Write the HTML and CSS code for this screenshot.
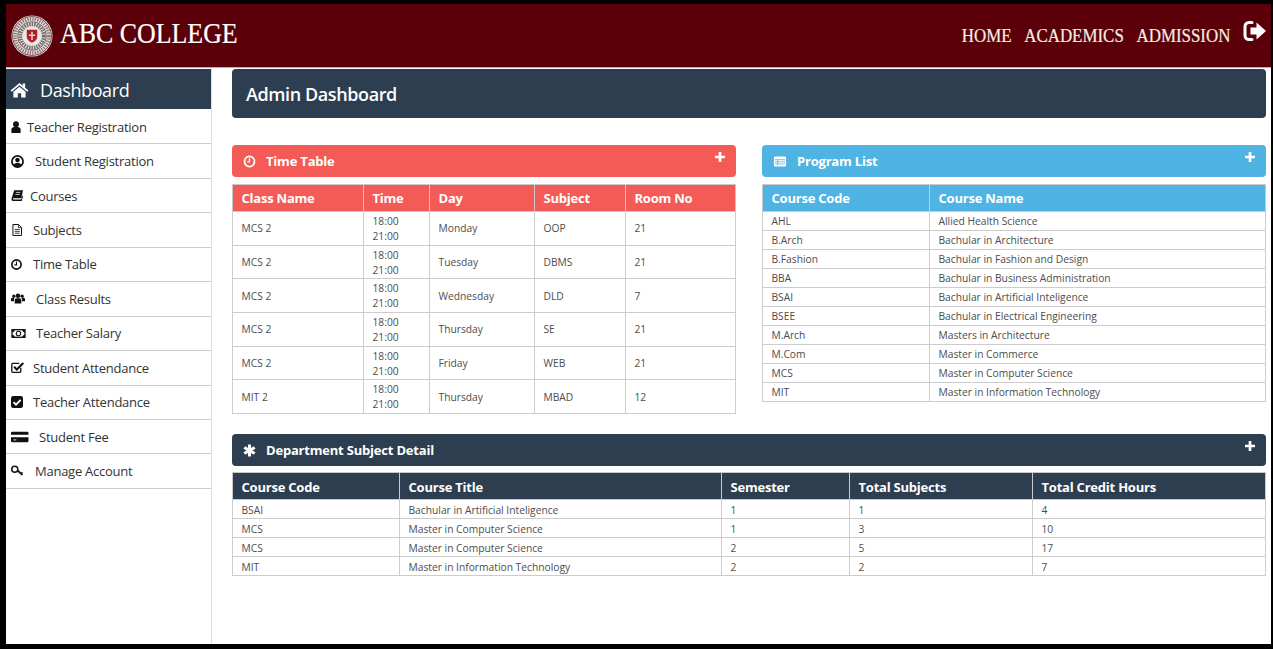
FILE: index.html
```html
<!DOCTYPE html>
<html lang="en">
<head>
<meta charset="utf-8">
<title>ABC College - Admin Dashboard</title>
<link rel="stylesheet" href="styles.css">
</head>
<body>
<svg class="defs" width="0" height="0" aria-hidden="true">
  <symbol id="i-plus" viewBox="0 0 12 12"><path d="M4.4 0h3.2v4.4H12v3.2H7.6V12H4.4V7.6H0V4.4h4.4z" fill="currentColor"/></symbol>
  <symbol id="i-clock" viewBox="0 0 14 14"><circle cx="7" cy="7" r="5.4" fill="none" stroke="currentColor" stroke-width="1.9"/><path d="M7 3.6v3.9H4.6" fill="none" stroke="currentColor" stroke-width="1.4"/></symbol>
</svg>
<div class="frame">
  <header class="topbar">
    <div class="brand">
      <svg class="logo" viewBox="0 0 44 44" aria-hidden="true">
        <circle cx="22" cy="22" r="21.5" fill="#e8e2e0"/>
        <circle cx="22" cy="22" r="20.300" fill="none" stroke="#6d4646" stroke-width="1"/>
        <circle cx="22" cy="22" r="17.700" fill="none" stroke="#8f7474" stroke-width="3.600" stroke-dasharray="1.400 1.200"/>
        <circle cx="22" cy="22" r="15" fill="none" stroke="#5f3a3a" stroke-width=".8"/>
        <circle cx="22" cy="22" r="12.300" fill="none" stroke="#6f6f6f" stroke-width="4" stroke-dasharray="1.600 1"/>
        <circle cx="22" cy="22" r="9.500" fill="#ede6e3"/>
        <path d="M16.500 15.500h11v7c0 3.500-3 5.500-5.500 6.500-2.500-1-5.500-3-5.500-6.500z" fill="#ad1f2a"/>
        <path d="M21.200 17.500h1.600v3h2.500v1.600h-2.500v4h-1.600v-4h-2.500v-1.600h2.500z" fill="#eccfc8"/>
      </svg>
      <span class="brand-name">ABC COLLEGE</span>
    </div>
    <nav class="topnav">
      <div class="topnav-links">
        <a class="topnav-link">HOME</a>
        <a class="topnav-link">ACADEMICS</a>
        <a class="topnav-link">ADMISSION</a>
      </div>
      <svg class="signout" viewBox="0 0 24 22" aria-hidden="true">
        <path d="M9 2.500H6A4 4 0 0 0 2 6.500v9a4 4 0 0 0 4 4h3" fill="none" stroke="currentColor" stroke-width="3" stroke-linecap="round"/>
        <path d="M13.500 2.500l9.500 8.500-9.500 8.500v-5H7.500v-7h6z" fill="currentColor"/>
      </svg>
    </nav>
  </header>
  <div class="body-row">
    <aside class="sidebar">
      <div class="side-head">
        <svg class="side-home" viewBox="0 0 20 17" aria-hidden="true"><path d="M10 1L0.500 9l1.200 1.400L10 3.500l8.300 6.900L19.500 9 16 6V1.500h-2.500v2.400z" fill="currentColor"/><path d="M10 5l-6.500 5.400V16.500h4.700v-4.500h3.600v4.500h4.700v-6.100z" fill="currentColor"/></svg>
        <span>Dashboard</span>
      </div>
      <a class="side-item it-user"><svg class="si" viewBox="2 .5 10 13"><circle cx="7" cy="4" r="3.200" fill="currentColor"/><path d="M2 13.500V10c0-2 1.500-3 3-3h4c1.500 0 3 1 3 3v3.500z" fill="currentColor"/></svg>Teacher Registration</a>
      <a class="side-item it-circle"><svg class="si" viewBox=".5 .5 13 13"><circle cx="7" cy="7" r="5.600" fill="none" stroke="currentColor" stroke-width="1.700"/><circle cx="7" cy="5.500" r="2.300" fill="currentColor"/><path d="M3 11c.5-2 2-2.800 4-2.800s3.500.8 4 2.800l-4 2z" fill="currentColor"/></svg>Student Registration</a>
      <a class="side-item it-book"><svg class="si" viewBox=".3 1.300 13.400 12.400"><path d="M3.500 1.500H13.500L11.500 10.500H2.800C2.200 10.500 2 11 2 11.300s.3.700.9.700H11.500l1-4.500 1 .5-1.500 6H2.500C1 13.500.300 12.500.600 11z" fill="currentColor"/><path d="M5.500 4h5M5 6.300h5" stroke="#fff" stroke-width=".8"/></svg>Courses</a>
      <a class="side-item it-file"><svg class="si" viewBox="1.500 .4 11 13.200"><path d="M2.500 1h6.300L12 4.200V13H2.500z" fill="none" stroke="currentColor" stroke-width="1.100"/><path d="M8.500 1v3.500H12M4.500 6.500h5.500M4.500 8.500h5.500M4.500 10.500h5.500" fill="none" stroke="currentColor" stroke-width=".9"/></svg>Subjects</a>
      <a class="side-item it-clock"><svg class="si" viewBox=".6 .6 12.800 12.800"><use href="#i-clock" width="14" height="14"/></svg>Time Table</a>
      <a class="side-item it-users"><svg class="si" viewBox="0 .8 17 13"><circle cx="8.500" cy="4" r="2.700" fill="currentColor"/><circle cx="3.500" cy="4.500" r="2" fill="currentColor"/><circle cx="13.500" cy="4.500" r="2" fill="currentColor"/><path d="M4.500 13.500V9.500c0-1.500 1-2.500 2.500-2.500h3c1.500 0 2.500 1 2.500 2.500v4z" fill="currentColor"/><path d="M0 10.500V8c0-1 .8-1.700 1.800-1.700H4L3.400 10.500zM17 10.500V8c0-1-.8-1.700-1.800-1.700H13l.6 4.200z" fill="currentColor"/></svg>Class Results</a>
      <a class="side-item it-money"><svg class="si" viewBox=".2 1.900 16.600 10.400"><rect x="1" y="2.700" width="15" height="8.800" fill="none" stroke="currentColor" stroke-width="1.500"/><circle cx="8.500" cy="7.100" r="2.600" fill="none" stroke="currentColor" stroke-width="1.300"/><path d="M1 2.700h3.200C4.200 4.500 2.800 5.700 1 5.700zM16 2.700h-3.200c0 1.800 1.400 3 3.200 3zM1 11.500h3.200C4.200 9.700 2.800 8.500 1 8.500zM16 11.500h-3.200c0-1.800 1.400-3 3.200-3z" fill="currentColor"/></svg>Teacher Salary</a>
      <a class="side-item it-check"><svg class="si" viewBox=".8 1.700 12.800 11"><path d="M10.500 7.500V11a1 1 0 0 1-1 1H2.500a1 1 0 0 1-1-1V4a1 1 0 0 1 1-1H9" fill="none" stroke="currentColor" stroke-width="1.300"/><path d="M3.800 6.500L6.500 9.200 13 2.700" fill="none" stroke="currentColor" stroke-width="2"/></svg>Student Attendance</a>
      <a class="side-item it-checked"><svg class="si" viewBox="1 1 12 12"><rect x="1" y="1" width="12" height="12" rx="2.200" fill="currentColor"/><path d="M3.500 7.200L6 9.700 10.700 4.800" fill="none" stroke="#fff" stroke-width="1.900"/></svg>Teacher Attendance</a>
      <a class="side-item it-card"><svg class="si" viewBox="0 1.500 18 11"><path d="M1.500 1.500h15A1.500 1.500 0 0 1 18 3v1.800H0V3a1.500 1.500 0 0 1 1.500-1.500zM0 7.200h18V11a1.500 1.500 0 0 1-1.500 1.500h-15A1.500 1.500 0 0 1 0 11z" fill="currentColor"/><path d="M2.500 10h3" stroke="#fff" stroke-width=".9"/></svg>Student Fee</a>
      <a class="side-item it-key"><svg class="si" viewBox=".4 .7 14.200 12.200"><circle cx="4.700" cy="5" r="3.400" fill="none" stroke="currentColor" stroke-width="1.700"/><path d="M7.200 7.300L12.500 12.200 14.200 11 13 9.800 14 9 12.800 8 11.800 8.800 8.700 5.800" fill="currentColor"/></svg>Manage Account</a>
    </aside>
    <main class="main">
      <div class="title-bar">Admin Dashboard</div>
      <div class="two-col">
        <section>
          <div class="panel red"><svg class="pi" viewBox="0 0 14 14"><use href="#i-clock" width="14" height="14"/></svg><span>Time Table</span><svg class="plus" viewBox="0 0 12 12"><use href="#i-plus" width="12" height="12"/></svg></div>
          <table class="tbl tbl-red tall">
            <colgroup><col class="c131"><col class="c66"><col class="c105"><col class="c91"><col></colgroup>
            <thead><tr><th>Class Name</th><th>Time</th><th>Day</th><th>Subject</th><th>Room No</th></tr></thead>
            <tbody>
              <tr><td>MCS 2</td><td>18:00<br>21:00</td><td>Monday</td><td>OOP</td><td>21</td></tr>
              <tr><td>MCS 2</td><td>18:00<br>21:00</td><td>Tuesday</td><td>DBMS</td><td>21</td></tr>
              <tr><td>MCS 2</td><td>18:00<br>21:00</td><td>Wednesday</td><td>DLD</td><td>7</td></tr>
              <tr><td>MCS 2</td><td>18:00<br>21:00</td><td>Thursday</td><td>SE</td><td>21</td></tr>
              <tr><td>MCS 2</td><td>18:00<br>21:00</td><td>Friday</td><td>WEB</td><td>21</td></tr>
              <tr><td>MIT 2</td><td>18:00<br>21:00</td><td>Thursday</td><td>MBAD</td><td>12</td></tr>
            </tbody>
          </table>
        </section>
        <section>
          <div class="panel blue"><svg class="pi" viewBox="0 0 14 14"><rect x=".5" y="1.500" width="13" height="11" rx="1.200" fill="currentColor"/><path d="M1.500 5h11M1.500 7.300h11M1.500 9.600h11M4.500 5v6" stroke="#4fb3e3" stroke-width=".8"/></svg><span>Program List</span><svg class="plus" viewBox="0 0 12 12"><use href="#i-plus" width="12" height="12"/></svg></div>
          <table class="tbl tbl-blue">
            <colgroup><col class="c167"><col></colgroup>
            <thead><tr><th>Course Code</th><th>Course Name</th></tr></thead>
            <tbody>
              <tr><td>AHL</td><td>Allied Health Science</td></tr>
              <tr><td>B.Arch</td><td>Bachular in Architecture</td></tr>
              <tr><td>B.Fashion</td><td>Bachular in Fashion and Design</td></tr>
              <tr><td>BBA</td><td>Bachular in Business Administration</td></tr>
              <tr><td>BSAI</td><td>Bachular in Artificial Inteligence</td></tr>
              <tr><td>BSEE</td><td>Bachular in Electrical Engineering</td></tr>
              <tr><td>M.Arch</td><td>Masters in Architecture</td></tr>
              <tr><td>M.Com</td><td>Master in Commerce</td></tr>
              <tr><td>MCS</td><td>Master in Computer Science</td></tr>
              <tr><td>MIT</td><td>Master in Information Technology</td></tr>
            </tbody>
          </table>
        </section>
      </div>
      <section class="wide">
        <div class="panel navy"><svg class="pi" viewBox="0 0 14 14"><path d="M7 .5v13M1.400 3.800l11.200 6.400M12.600 3.800L1.400 10.200" stroke="currentColor" stroke-width="3.300" fill="none"/></svg><span>Department Subject Detail</span><svg class="plus" viewBox="0 0 12 12"><use href="#i-plus" width="12" height="12"/></svg></div>
        <table class="tbl tbl-navy">
          <colgroup><col class="c167"><col class="c322"><col class="c128"><col class="c183"><col></colgroup>
          <thead><tr><th>Course Code</th><th>Course Title</th><th>Semester</th><th>Total Subjects</th><th>Total Credit Hours</th></tr></thead>
          <tbody>
            <tr><td>BSAI</td><td>Bachular in Artificial Inteligence</td><td>1</td><td>1</td><td>4</td></tr>
            <tr><td>MCS</td><td>Master in Computer Science</td><td>1</td><td>3</td><td>10</td></tr>
            <tr><td>MCS</td><td>Master in Computer Science</td><td>2</td><td>5</td><td>17</td></tr>
            <tr><td>MIT</td><td>Master in Information Technology</td><td>2</td><td>2</td><td>7</td></tr>
          </tbody>
        </table>
      </section>
    </main>
  </div>
</div>
</body>
</html>
```
FILE: styles.css
```css
* { box-sizing: border-box; }
html, body { margin: 0; height: 100%; overflow: hidden; }
body { font-family: "Open Sans", "Noto Sans", sans-serif; color: #333; background: #000; }
.defs { display: block; height: 0; }
.frame {
  height: 649px;
  border-style: solid;
  border-color: #000;
  border-width: 4px 2px 5px 6px;
  background: #fff;
  display: flex;
  flex-direction: column;
}
.topbar {
  height: 64px;
  flex: none;
  background: #5b0008;
  display: flex;
  justify-content: space-between;
  color: #fff;
  border-bottom: 1px solid #b9b0b0;
}
.brand { display: flex; align-items: center; padding-left: 5px; gap: 7px; }
.logo { width: 42px; height: 42px; display: block; }
.brand-name {
  font-family: "Liberation Serif", serif;
  font-size: 29px;
  line-height: 1;
  position: relative;
  top: -2px;
  transform: scaleX(.893);
  transform-origin: left center;
  -webkit-text-stroke: .2px #fff;
}
.topnav { display: flex; align-items: center; padding-right: 4px; color: #f6efe0; }
.topnav-links {
  font-family: "Liberation Serif", serif;
  font-size: 19px;
  transform: scaleX(.89);
  transform-origin: right center;
  -webkit-text-stroke: .2px #f6efe0;
  margin-right: 13px;
}
.topnav-link { margin-left: 9.5px; }
.signout { width: 24px; height: 22px; color: #fff; margin: -10px 0 0 0; }
.body-row { flex: 1; display: flex; min-height: 0; }
.sidebar { width: 206px; flex: none; border-right: 1px solid #ddd; padding-top: 1px; }
.side-head {
  height: 40px;
  background: #2c3e50;
  color: #fff;
  font-size: 18px;
  letter-spacing: -.4px;
  display: flex;
  align-items: center;
  padding: 1px 0 0 4px;
  gap: 11px;
  margin-bottom: 1px;
}
.side-home { width: 19px; height: 16px; }
.side-item {
  height: 34.45px;
  display: flex;
  align-items: center;
  padding-left: 5px;
  font-size: 13px;
  letter-spacing: -.25px;
  color: #333;
  border-bottom: 1px solid #ccc;
}
.si { color: #111; flex: none; display: block; }
.it-user .si { width: 10px; height: 12px; margin-right: 6px; }
.it-circle .si { width: 13px; height: 13px; margin-right: 11px; }
.it-book .si { width: 12.5px; height: 11px; margin-right: 6.5px; }
.it-file .si { width: 12px; height: 12px; margin-right: 10px; }
.it-clock .si { width: 11px; height: 11px; margin-right: 11px; }
.it-users .si { width: 14px; height: 13px; margin-right: 11px; }
.it-money .si { width: 15px; height: 9px; margin-right: 10px; }
.it-check .si { width: 13px; height: 11px; margin-right: 9px; }
.it-checked .si { width: 12px; height: 12px; margin-right: 10px; }
.it-card .si { width: 17.5px; height: 12px; margin-right: 10.5px; }
.it-key .si { width: 12.5px; height: 11.5px; margin-right: 11.5px; }
.main { flex: 1; min-width: 0; padding: 1px 5px 0 20px; }
.title-bar {
  height: 49px;
  background: #2c3e50;
  border-radius: 4px;
  color: #fff;
  font-size: 18px;
  font-weight: 600;
  letter-spacing: -.4px;
  display: flex;
  align-items: center;
  padding-left: 14px;
}
.two-col { display: grid; grid-template-columns: 504px 504px; column-gap: 26px; margin-top: 27px; }
.wide { margin-top: 20px; }
.panel {
  height: 32px;
  border-radius: 4px;
  color: #fff;
  font-size: 13px;
  font-weight: 700;
  letter-spacing: -.2px;
  display: flex;
  align-items: center;
  padding-left: 11px;
  position: relative;
}
.red { background: #f45b57; }
.blue { background: #4fb3e3; }
.navy { background: #2c3e50; }
.pi { width: 13px; height: 13px; margin-right: 10px; flex: none; }
.blue .pi { width: 14px; }
.plus { position: absolute; right: 11px; top: 7px; width: 10px; height: 10px; }
.tbl {
  width: 100%;
  table-layout: fixed;
  border-collapse: collapse;
  margin-top: 7px;
  font-size: 10.25px;
  color: #4d4d4d;
}
.tbl th {
  height: 27px;
  font-size: 13px;
  font-weight: 700;
  letter-spacing: -.22px;
  color: #fff;
  text-align: left;
  padding: 0 0 0 8.5px;
  border: 1px solid #c9c9c9;
}
.tbl td {
  height: 19px;
  padding: 0 0 0 8.5px;
  line-height: 15px;
  border: 1px solid #ccc;
}
.tall td { height: 33.7px; padding-top: 1px; }
.tbl-red th { background: #f45b57; }
.tbl-blue th { background: #4fb3e3; }
.tbl-navy { margin-top: 6px; }
.tbl-navy th { background: #2c3e50; padding-top: 2px; }
.tbl-navy td { padding-top: 3px; }
.c131 { width: 131px; }
.c66 { width: 66px; }
.c105 { width: 105px; }
.c91 { width: 91px; }
.c167 { width: 167px; }
.c322 { width: 322px; }
.c128 { width: 128px; }
.c183 { width: 183px; }
```
